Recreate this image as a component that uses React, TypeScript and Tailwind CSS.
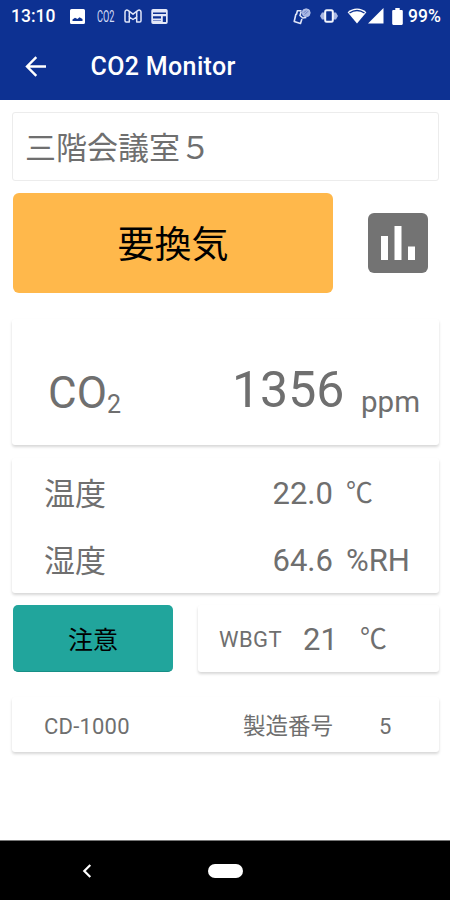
import React from 'react';

function StatusBar() {
  return (
    <div className="flex h-8 items-center text-white">
      <span className="ml-[11px] w-[59px] text-[17.5px] leading-8 font-medium">13:10</span>
      <svg className="h-[15px] w-[15px]" viewBox="0 0 15 15">
        <path fill="#fff" fillRule="evenodd" d="M1.500 0h12A1.500 1.500 0 0 1 15 1.500v12a1.500 1.500 0 0 1-1.500 1.500h-12A1.500 1.500 0 0 1 0 13.500v-12A1.500 1.500 0 0 1 1.500 0ZM2.500 12h10V10L9.500 8.300 7.500 10 5 8.800 2.500 10.500V12Z" />
      </svg>
      <span className="ml-[12px] w-[16px]">
        <span className="block w-[30px] origin-left scale-x-[0.54] text-[17px] leading-8 text-[#d3dbf5]">CO2</span>
      </span>
      {/* Gmail */}
      <svg className="ml-[11px] h-[14px] w-[18px]" viewBox="0 0 18 14" fill="none" stroke="#dfe5f8" strokeWidth="1.500" strokeLinejoin="round">
        <path d="M5.300 13H2.200A1.200 1.200 0 0 1 1 11.800V3C1 1 3 .6 4.300 1.600L9 5.200l4.700-3.600C15 .6 17 1 17 3v8.800a1.200 1.200 0 0 1-1.200 1.200h-3.100V8L9 10.500 5.300 8v5Z" />
        <path d="M5.300 8V2.500M12.700 8V2.500" />
      </svg>
      {/* News */}
      <svg className="ml-[9px] h-[15px] w-[17px]" viewBox="0 0 17 15">
        <path fill="#e3e8f8" fillRule="evenodd" d="M2 0h13a1.700 1.700 0 0 1 1.700 1.700v11.600A1.700 1.700 0 0 1 15 15H2A1.700 1.700 0 0 1 .3 13.300V1.700A1.700 1.700 0 0 1 2 0ZM2 3.500v1.500h13V3.500H2Zm0 3.700v2.300h8V7.200H2Zm9.800 0V13H15V7.200h-3.200Z" />
        <path d="M2 11.500h8" stroke="#7f91cd" />
      </svg>
      {/* NFC phone */}
      <svg className="ml-[125px] h-[18px] w-[18px]" viewBox="0 0 18 18" fill="none" stroke="#dfe5f8" strokeWidth="1.600">
        <path d="M8.500 3.800H4.400L3.600 7 2.800 7.500 1.200 14.500l6.300 2 1.400-4.500" strokeLinejoin="round" />
        <path d="M8.200 4.500 7 8.500l2.800 2.500 3.500-.5" />
        <circle cx="13.200" cy="5.800" r="4" fill="#a9b7e3" stroke="#b9c5ea" strokeWidth=".8" />
        <path d="m10.800 5.800 2.300-2.300M11.700 7.600l3.400-3.400" stroke="#5369b8" strokeWidth=".8" />
      </svg>
      {/* Vibrate */}
      <svg className="ml-[8px] h-[14px] w-[20px]" viewBox="0 0 20 14">
        <path fill="#a9b7e3" d="M1 7 3 3.500h3v7H3ZM19 7l-2-3.500h-3v7h3Z" />
        <rect x="6.200" y="1.200" width="7.600" height="11.600" rx="1.500" fill="#0d3192" stroke="#f1f4fc" strokeWidth="2" />
      </svg>
      {/* Wifi */}
      <svg className="ml-[8px] h-[16px] w-[20px]" viewBox="0 0 20 16">
        <path fill="#fff" d="M10 15.500 0.600 4.200C6 -.7 14 -.7 19.400 4.200Z" />
        <path d="M2.500 5c4.800-3.200 10.200-3.200 15 0" fill="none" stroke="#0d3192" strokeWidth="1.500" />
      </svg>
      <svg className="ml-[1px] h-[16px] w-[16px]" viewBox="0 0 16 16">
        <path fill="#fff" d="M15.500 0v15.500H0Z" />
      </svg>
      {/* Battery */}
      <svg className="ml-[8px] h-[17px] w-[11px]" viewBox="0 0 11 17">
        <path fill="#fff" d="M3.300 0h4.400v2h2A1.100 1.100 0 0 1 10.800 3.100v12.700a1.100 1.100 0 0 1-1.100 1.100H1.300A1.100 1.100 0 0 1 .2 15.800V3.100A1.100 1.100 0 0 1 1.300 2h2Z" />
      </svg>
      <span className="ml-[5px] text-[17.500px] leading-8 font-medium">99%</span>
    </div>
  );
}

const card = 'rounded-[3px] bg-white shadow-[0_2px_3px_rgba(0,0,0,0.16)]';

export default function App() {
  return (
    <div className="flex h-[900px] w-[450px] flex-col overflow-hidden bg-white whitespace-nowrap text-[#6f6f6f] [font-family:Roboto,'Noto_Sans_CJK_JP',sans-serif]">
      <header className="h-[100px] bg-[#0d3192] text-white">
        <StatusBar />
        <div className="flex h-[68px] items-center">
          <svg className="ml-[25px] h-[21px] w-[22px]" viewBox="0 0 22 21" fill="none" stroke="#fff" strokeWidth="2.400">
            <path d="M21 10.500H2.500M11.300 1.200 2 10.500l9.300 9.300" />
          </svg>
          <h1 className="ml-[43.5px] pt-[2px] text-[25px] leading-[68px] font-medium tracking-[0.35px]">CO2 Monitor</h1>
        </div>
      </header>

      <main className="flex-1 px-3 pt-3">
        {/* Room name */}
        <div className="h-[69px] w-[427px] rounded-[3px] border border-[#ececec] px-[12px] text-[31px] leading-[71px]">
          三階会議室５
        </div>

        <div className="mt-[12px] flex h-[100px] items-center">
          <div className="ml-px h-[100px] w-[320px] rounded-[6px] bg-[#ffb84b] text-center text-[37px] leading-[106px] text-black">
            要換気
          </div>
          <svg className="ml-[35px] h-[60px] w-[60px]" viewBox="0 0 60 60">
            <rect width="60" height="60" rx="6" fill="#737373" />
            <path fill="#fff" d="M13 23h7v24h-7zM26.500 13h7v34h-7zM40 33.500h7V47h-7z" />
          </svg>
        </div>

        {/* CO2 */}
        <div className={`${card} mt-[26px] flex h-[126px] w-[427px] items-baseline`}>
          <span className="ml-[36px] w-[59px] text-[44px] leading-[149px]">CO</span>
          <span className="relative top-[5px] w-[125px] text-[25px]">2</span>
          <span className="relative -top-px w-[129px] text-[50px] leading-none">1356</span>
          <span className="relative top-[4px] text-[29.500px] leading-none">ppm</span>
        </div>

        {/* Temperature and humidity */}
        <div className={`${card} mt-[13px] grid h-[135px] w-[427px] grid-cols-[228.5px_73.5px_1fr] grid-rows-[67px_67px] pt-px pl-8 text-[31px] leading-[69px]`}>
          <span className="pt-px">温度</span>
          <span>22.0</span>
          <span className="origin-left scale-x-[0.96] text-[28px]">℃</span>
          <span className="pt-px">湿度</span>
          <span>64.6</span>
          <span>%RH</span>
        </div>

        <div className="mt-[12px] flex h-[67px] w-[427px]">
          <div className="ml-px w-[160px] rounded-[5px] border-b border-[#168f86] bg-[#21a59c] text-center text-[25px] leading-[71px] text-black">
            注意
          </div>
          <div className={`${card} ml-[25px] flex flex-1 leading-[70px]`}>
            <span className="ml-[21px] w-[84px] text-[22px] tracking-[0.4px]">WBGT</span>
            <span className="w-[57px] text-[31px]">21</span>
            <span className="origin-left scale-x-[0.96] text-[28px]">℃</span>
          </div>
        </div>

        {/* Device */}
        <div className={`${card} mt-[25px] flex h-[55px] w-[427px] text-[22px] leading-[59px]`}>
          <span className="ml-8 w-[199px] tracking-[0.2px]">CD-1000</span>
          <span className="w-[136px] text-[22.500px]">製造番号</span>
          <span>5</span>
        </div>
      </main>

      <nav className="flex h-[60px] items-center border-t border-[#777] bg-black">
        <svg className="ml-[82px] h-[14px] w-[10px]" viewBox="0 0 10 14" fill="none" stroke="#fff" strokeWidth="2.200">
          <path d="M8.300 1 2.300 7l6 6" />
        </svg>
        <div className="ml-[116px] h-[14px] w-[35px] rounded-full bg-white" />
      </nav>
    </div>
  );
}
